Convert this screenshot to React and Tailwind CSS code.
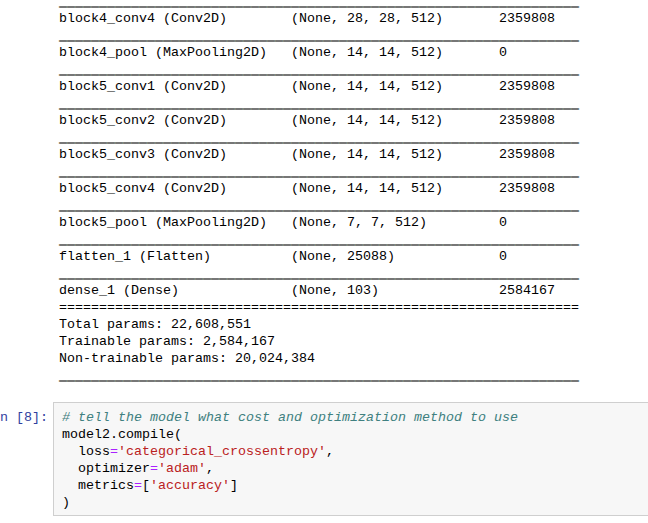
import React from "react";

const rule = "_".repeat(65);
const dbl = "=".repeat(65);

const layers = [
  ["block4_conv4 (Conv2D)", "(None, 28, 28, 512)", "2359808"],
  ["block4_pool (MaxPooling2D)", "(None, 14, 14, 512)", "0"],
  ["block5_conv1 (Conv2D)", "(None, 14, 14, 512)", "2359808"],
  ["block5_conv2 (Conv2D)", "(None, 14, 14, 512)", "2359808"],
  ["block5_conv3 (Conv2D)", "(None, 14, 14, 512)", "2359808"],
  ["block5_conv4 (Conv2D)", "(None, 14, 14, 512)", "2359808"],
  ["block5_pool (MaxPooling2D)", "(None, 7, 7, 512)", "0"],
  ["flatten_1 (Flatten)", "(None, 25088)", "0"],
  ["dense_1 (Dense)", "(None, 103)", "2584167"],
];

// underscores drawn a bit heavier so they read as solid rules
function Rule() {
  return <span className="[text-shadow:0_0.6px_0_#000]">{rule}</span>;
}

function Eq() {
  return <span className="text-[#aa22ff]">=</span>;
}

function Str({ children }) {
  return <span className="text-[#ba2121]">{children}</span>;
}

export default function App() {
  return (
    <div
      className="w-[648px] h-[523px] overflow-hidden bg-white text-black text-[13.33px] leading-[17px]"
      style={{ fontFamily: '"Liberation Mono", "Courier New", monospace' }}
    >
      <pre className="-mt-[7px] pl-[59px] m-0 whitespace-pre" style={{ fontFamily: "inherit" }}>
        <Rule />
        {"\n"}
        {layers.map(([name, shape, params], i) => (
          <React.Fragment key={name}>
            {name.padEnd(29) + shape.padEnd(26) + params}
            {"\n"}
            {i === layers.length - 1 ? dbl : <Rule />}
            {"\n"}
          </React.Fragment>
        ))}
        {"Total params: 22,608,551\n"}
        {"Trainable params: 2,584,167\n"}
        {"Non-trainable params: 20,024,384\n"}
        <Rule />
      </pre>

      <div className="flex mt-[18px] gap-[5px]">
        <div className="w-[48px] shrink-0 flex justify-end whitespace-nowrap pt-[7px] text-[#303f9f]">
          In&nbsp;[8]:
        </div>
        <div className="flex-1 -mr-[20px] border border-[#cfcfcf] bg-[#f7f7f7] pl-[8px] pt-[6px] pb-[4px]">
          <pre className="m-0 whitespace-pre" style={{ fontFamily: "inherit" }}>
            <span className="italic text-[#408080]"># tell the model what cost and optimization method to use</span>
            {"\n"}model2.compile({"\n"}
            {"  "}loss<Eq /><Str>'categorical_crossentropy'</Str>,{"\n"}
            {"  "}optimizer<Eq /><Str>'adam'</Str>,{"\n"}
            {"  "}metrics<Eq />[<Str>'accuracy'</Str>]{"\n"}
            )
          </pre>
        </div>
      </div>
    </div>
  );
}
